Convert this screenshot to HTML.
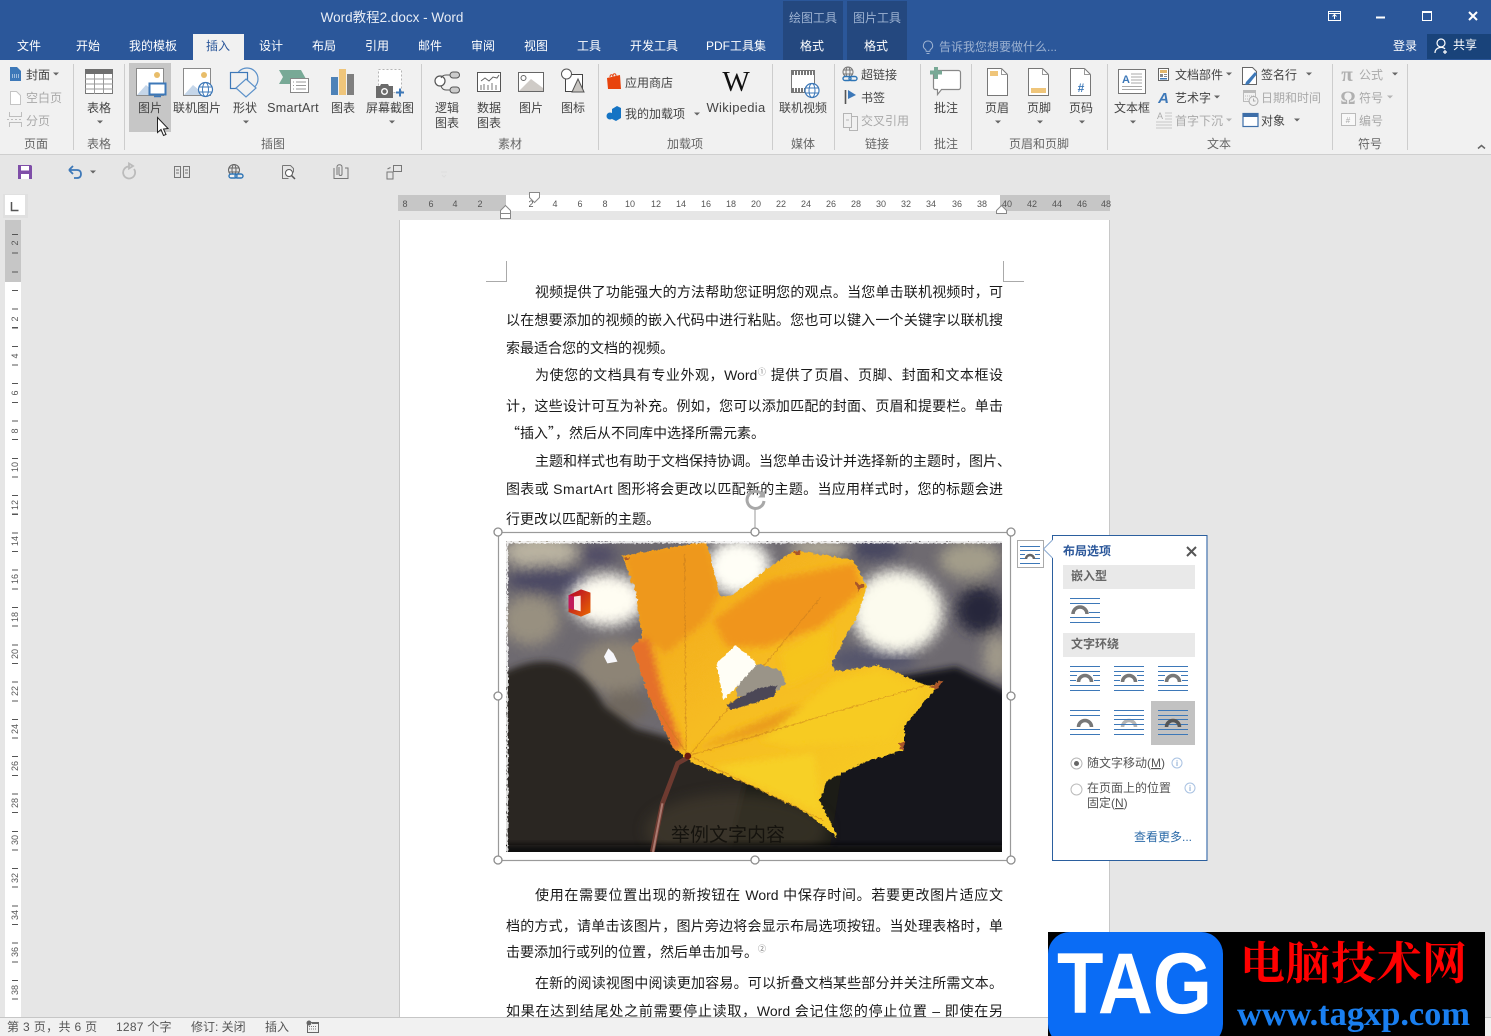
<!DOCTYPE html>
<html lang="zh-CN"><head><meta charset="utf-8"><title>Word教程2.docx - Word</title>
<style>
html,body{margin:0;padding:0;width:1491px;height:1036px;overflow:hidden;background:#e6e6e6}
body{position:relative;font-family:"Liberation Sans","Noto Sans CJK SC",sans-serif}
svg{position:absolute;left:0;top:0;display:block}
text{font-family:"Liberation Sans","Noto Sans CJK SC",sans-serif;font-size:12px;fill:#444}
.c{text-anchor:middle}
.g{fill:#a9a9a9}
.l{fill:#666}
.w{fill:#fff}
.t{fill:#e8edf5}
.page{position:absolute;left:400px;top:220px;width:709px;height:798px;background:#fff;box-shadow:-1px 0 0 #c8c8c8,1px 0 0 #c8c8c8}
.ln{position:absolute;left:506px;width:497px;height:20px;line-height:20px;font-size:14px;color:#1a1a1a;font-family:"Liberation Sans","WenQuanYi Zen Hei","Noto Sans CJK SC",sans-serif;text-align:justify;text-align-last:justify;white-space:nowrap}
.i{padding-left:29px;width:468px}
.s{text-align-last:left}
.q{font-family:"Noto Sans CJK SC",sans-serif}
.e{letter-spacing:.6px}
sup{font-size:8px;line-height:0;color:#777}
.vr{position:absolute;left:5px;top:220px;width:16px;height:798px;background:#fff}
.vr i{position:absolute;left:0;top:0;width:16px;height:62px;background:#c6c6c6}
.vt{position:absolute;left:7px;top:0;width:6px;height:798px;background:repeating-linear-gradient(to bottom,transparent 0,transparent 14px,#555 14px,#555 15px,transparent 15px,transparent 18.65px)}
</style></head><body>

<div class="page"></div>
<div class="vr"><i></i><div class="vt"></div></div>

<div class="ln i" style="top:282px">视频提供了功能强大的方法帮助您证明您的观点。当您单击联机视频时，可</div>
<div class="ln" style="top:310px">以在想要添加的视频的嵌入代码中进行粘贴。您也可以键入一个关键字以联机搜</div>
<div class="ln s" style="top:338px">索最适合您的文档的视频。</div>
<div class="ln i" style="top:365px">为使您的文档具有专业外观，Word<sup>①</sup> 提供了页眉、页脚、封面和文本框设</div>
<div class="ln" style="top:396px">计，这些设计可互为补充。例如，您可以添加匹配的封面、页眉和提要栏。单击</div>
<div class="ln s" style="top:423px"><span class="q">“插入”</span>，然后从不同库中选择所需元素。</div>
<div class="ln i" style="top:451px">主题和样式也有助于文档保持协调。当您单击设计并选择新的主题时，图片、</div>
<div class="ln" style="top:479px">图表或 <span class="e">SmartArt</span> 图形将会更改以匹配新的主题。当应用样式时，您的标题会进</div>
<div class="ln s" style="top:509px">行更改以匹配新的主题。</div>
<div class="ln i" style="top:885px">使用在需要位置出现的新按钮在 Word 中保存时间。若要更改图片适应文</div>
<div class="ln" style="top:916px">档的方式，请单击该图片，图片旁边将会显示布局选项按钮。当处理表格时，单</div>
<div class="ln s" style="top:942px">击要添加行或列的位置，然后单击加号。<sup>②</sup></div>
<div class="ln i" style="top:973px">在新的阅读视图中阅读更加容易。可以折叠文档某些部分并关注所需文本。</div>
<div class="ln" style="top:1001px">如果在达到结尾处之前需要停止读取，Word 会记住您的停止位置 – 即使在另</div>

<svg width="1491" height="1036" viewBox="0 0 1491 1036" xmlns="http://www.w3.org/2000/svg">
<defs>
<path id="ar" d="M-3-1.5h6l-3 3z" fill="#666"/>
<path id="arg" d="M-3-1.5h6l-3 3z" fill="#b5b5b5"/>
<path id="arc" d="M8.500 16a6.500 6.500 0 0 1 13 0" fill="none" stroke="#777" stroke-width="3.500"/>
<path id="wl" d="M0 .5h30M0 5.500h30M0 9.500h7M23 9.500h7M0 14.500h6M24 14.500h6M0 19.500h30M0 24.500h30" stroke="#3d78b8" fill="none"/>
<filter id="b8" x="-40%" y="-40%" width="180%" height="180%"><feGaussianBlur stdDeviation="20"/></filter>
<filter id="b3" x="-30%" y="-30%" width="160%" height="160%"><feGaussianBlur stdDeviation="10"/></filter>
<filter id="rough" x="-5%" y="-5%" width="110%" height="110%"><feTurbulence type="fractalNoise" baseFrequency=".09" numOctaves="2" seed="4"/><feDisplacementMap in="SourceGraphic" scale="14" xChannelSelector="R" yChannelSelector="G"/></filter>
<filter id="rough2" x="-5%" y="-5%" width="110%" height="110%"><feTurbulence type="fractalNoise" baseFrequency=".12" numOctaves="2" seed="9"/><feDisplacementMap in="SourceGraphic" scale="10" xChannelSelector="R" yChannelSelector="G"/></filter>
<linearGradient id="leafg" x1="0" y1="0" x2="1" y2="1"><stop offset="0" stop-color="#f0a01e"/><stop offset=".42" stop-color="#f6bb20"/><stop offset="1" stop-color="#f7d226"/></linearGradient>
<linearGradient id="off" x1="0" y1="0" x2="1" y2="1"><stop offset="0" stop-color="#b3002a"/><stop offset="1" stop-color="#ea6a00"/></linearGradient>
<clipPath id="imgc"><rect x="47" y="183" width="1468" height="933"/></clipPath>
<clipPath id="leafc"><path d="M390 228L640 185 680 350 710 350 830 260 900 212 1075 240 1115 320 1090 400 1010 550 1020 575 1150 555 1300 620 1340 600 1225 740 1225 810 1100 850 1000 900 975 960 1030 1075 940 1000 780 920 600 850 540 800 470 650 420 500 450 470 430 330z"/></clipPath>
</defs>

<!-- title bar -->
<rect width="1491" height="60" fill="#2b579a"/>
<rect x="783" y="1" width="60" height="59" fill="#24487f"/>
<rect x="847" y="1" width="60" height="59" fill="#24487f"/>
<rect x="1427" y="34" width="64" height="25" fill="#19437a"/>
<rect x="193" y="34" width="51" height="26" fill="#f1f1f1"/>
<text x="392" y="22" class="c t" style="font-size:13.5px">Word教程2.docx - Word</text>
<text x="813" y="22" class="c" style="fill:#9db2d1">绘图工具</text>
<text x="877" y="22" class="c" style="fill:#9db2d1">图片工具</text>
<g class="tabs">
<text x="29" y="50" class="c w">文件</text><text x="88" y="50" class="c w">开始</text><text x="153" y="50" class="c w">我的模板</text>
<text x="218" y="50" class="c" style="fill:#2b579a">插入</text><text x="271" y="50" class="c w">设计</text><text x="324" y="50" class="c w">布局</text>
<text x="377" y="50" class="c w">引用</text><text x="430" y="50" class="c w">邮件</text><text x="483" y="50" class="c w">审阅</text>
<text x="536" y="50" class="c w">视图</text><text x="589" y="50" class="c w">工具</text><text x="654" y="50" class="c w">开发工具</text>
<text x="736" y="50" class="c w">PDF工具集</text><text x="812" y="50" class="c w">格式</text><text x="876" y="50" class="c w">格式</text>
<text x="939" y="51" style="fill:#9db2d1">告诉我您想要做什么...</text>
<text x="1405" y="50" class="c w">登录</text><text x="1465" y="49" class="c w">共享</text>
</g>
<path d="M928 41a4.6 4.6 0 0 1 2.6 8.4c-.6.5-.7 1-.8 2h-3.6c-.1-1-.2-1.500-.8-2A4.600 4.600 0 0 1 928 41zM926.500 53.500h3" fill="none" stroke="#9db2d1"/>
<!-- window controls -->
<path d="M1328.500 11.500h12v9h-12zM1328.500 13.500h12M1334.500 19v-4M1332.500 16.500l2-2 2 2" fill="none" stroke="#fff"/>
<path d="M1376 17.500h9" stroke="#fff" stroke-width="2"/>
<path d="M1422.500 11.500h9v9h-9z" fill="none" stroke="#fff"/><path d="M1422 12h10" stroke="#fff" stroke-width="2"/>
<path d="M1469 12l8 8M1477 12l-8 8" stroke="#fff" stroke-width="2"/>
<circle cx="1441" cy="43" r="4" fill="none" stroke="#fff" stroke-width="1.200"/><path d="M1435 53c0-6 8-7 10-4M1445 50v4M1443 52h4" fill="none" stroke="#fff" stroke-width="1.200"/>

<!-- ribbon -->
<rect y="60" width="1491" height="94" fill="#f1f1f1"/>
<rect y="154" width="1491" height="1" fill="#cfcfcf"/>
<path d="M73.500 64v86M124.500 64v86M421.500 64v86M598.500 64v86M772.500 64v86M834.500 64v86M920.500 64v86M971.500 64v86M1107.500 64v86M1332.500 64v86M1407.500 64v86" stroke="#cdcdcd"/>
<rect x="129" y="63" width="42" height="69" fill="#c6c6c6"/>

<!-- page group -->
<path d="M10 67h7l4 4v10H10z" fill="#3d78b8"/><path d="M12 75h7M12 77h7" stroke="#fff" stroke-dasharray="1 1"/>
<text x="26" y="79">封面</text><use href="#ar" x="56" y="74"/>
<path d="M10.500 91.500h6l4 4v9h-10z" fill="#fff" stroke="#c4c4c4"/>
<text x="26" y="102" class="g">空白页</text>
<path d="M9.500 112v4.500h12V112M9.500 127v-4.500h12v4.500M7 119.500h2M11 119.500h2M15 119.500h2M19 119.500h2" fill="none" stroke="#bdbdbd"/>
<text x="26" y="125" class="g">分页</text>
<text x="36" y="148" class="c l">页面</text>

<!-- table -->
<rect x="85.500" y="69.500" width="27" height="24" fill="#fff" stroke="#777"/><rect x="85" y="69" width="28" height="5" fill="#6f6f6f"/>
<path d="M85 79h28M85 84h28M85 89h28M94.500 74v20M103.500 74v20" stroke="#9a9a9a"/>
<text x="99" y="112" class="c">表格</text><use href="#ar" x="100" y="122"/><text x="99" y="148" class="c l">表格</text>

<!-- picture -->
<g>
<rect x="136.500" y="68.500" width="27" height="27" fill="#fff" stroke="#8a8a8a"/>
<path d="M137 95l9-10 6 5 3-2 8 7z" fill="#c5d6e9"/><circle cx="157" cy="75" r="3" fill="#e8bd6a"/>
<rect x="149.500" y="83.500" width="16" height="11" fill="#fff" stroke="#3d78b8" stroke-width="2"/><path d="M154 96.500h7" stroke="#3d78b8" stroke-width="1.500"/>
</g>
<text x="150" y="112" class="c">图片</text>
<!-- cursor -->
<path d="M157.500 117.500v15l3.500-3 2.500 6 2.500-1-2.500-5.500 4.500-.5z" fill="#fff" stroke="#222"/>

<!-- online pic -->
<rect x="183.500" y="68.500" width="27" height="27" fill="#fff" stroke="#8a8a8a"/>
<path d="M184 95l9-10 6 5 3-2 8 7z" fill="#c5d6e9"/><circle cx="204" cy="75" r="3" fill="#e8bd6a"/>
<circle cx="205.500" cy="89.500" r="7" fill="#fff" stroke="#3d78b8" stroke-width="1.200"/><ellipse cx="205.500" cy="89.500" rx="3" ry="7" fill="none" stroke="#3d78b8"/><path d="M199 87h13M199 92h13" stroke="#3d78b8"/>
<text x="197" y="112" class="c">联机图片</text>

<!-- shapes -->
<circle cx="247" cy="79" r="11" fill="none" stroke="#5c91c9" stroke-width="1.200"/>
<rect x="230.500" y="72.500" width="17" height="16" fill="#f1f1f1" stroke="#3d78b8" stroke-width="1.200"/>
<path d="M246 79l10 9-10 9-10-9z" fill="#f1f1f1" stroke="#5c91c9" stroke-width="1.200"/>
<text x="245" y="112" class="c">形状</text><use href="#ar" x="246" y="122"/>

<!-- smartart -->
<path d="M279 70h22l5 9h-16v5h-11l4-7z" fill="#78a996"/>
<rect x="290.500" y="78.500" width="18" height="14" fill="#fff" stroke="#888"/><path d="M293 82h1M296 82h10M293 85.500h1M296 85.500h10M293 89h1M296 89h10" stroke="#999"/>
<text x="293" y="112" class="c" style="letter-spacing:.3px;font-size:12.500px">SmartArt</text>

<!-- chart -->
<rect x="331" y="77" width="7" height="18" fill="#4d82b8"/><rect x="339" y="69" width="7" height="26" fill="#efc57a"/><rect x="347" y="74" width="7" height="21" fill="#7f7f7f"/>
<text x="343" y="112" class="c">图表</text>

<!-- screenshot -->
<rect x="378.500" y="69.500" width="23" height="23" fill="#fff" stroke="#b5b5b5" stroke-dasharray="2 2"/>
<path d="M376 86h4l1-2h7l1 2h4v12h-17z" fill="#6b6b6b"/><circle cx="384.500" cy="91.500" r="2.800" fill="none" stroke="#fff" stroke-width="1.400"/>
<path d="M396 92.500h8M400 88.500v8" stroke="#3d78b8" stroke-width="2"/>
<text x="390" y="112" class="c">屏幕截图</text><use href="#ar" x="392" y="122"/>
<text x="273" y="148" class="c l">插图</text>

<!-- logic chart -->
<circle cx="440" cy="81" r="5" fill="#fff" stroke="#555" stroke-width="1.200"/>
<rect x="450" y="72" width="9.500" height="6" rx="3" fill="#ccc" stroke="#555"/><rect x="450" y="87" width="9.500" height="6" rx="3" fill="#ccc" stroke="#555"/>
<path d="M450 75h-4c-2 0-4 1-5 3M450 90h-4c-2 0-4-1-5-4" fill="none" stroke="#555"/>
<text x="447" y="112" class="c">逻辑</text><text x="447" y="127" class="c">图表</text>
<!-- data chart -->
<rect x="477.500" y="72.500" width="23" height="19" fill="#fff" stroke="#555"/>
<path d="M481 81l4-3 4 3 4-4 4 1 2-3" fill="none" stroke="#666"/><path d="M481 90v-5M484 90v-6M488 90v-5M492 90v-7M496 90v-5" stroke="#777"/>
<text x="489" y="112" class="c">数据</text><text x="489" y="127" class="c">图表</text>
<!-- picture material -->
<rect x="518.500" y="72.500" width="25" height="19" fill="#fff" stroke="#666"/><path d="M519 91l12-12 12 9v3z" fill="#cfcbc7"/><circle cx="523.500" cy="78" r="2.500" fill="#fff" stroke="#666"/>
<text x="531" y="112" class="c">图片</text>
<!-- icon material -->
<path d="M565.500 74.500h17v17h-17z" fill="#fff" stroke="#444"/><path d="M572 92l6-13 6 13z" fill="#c9c6c2" stroke="#555"/><circle cx="566.500" cy="74" r="5" fill="#fff" stroke="#555"/>
<text x="573" y="112" class="c">图标</text>
<text x="510" y="148" class="c l">素材</text>

<!-- add-ins -->
<path d="M607 78l13-3 1 14-13 0z" fill="#e8430d"/><path d="M610 77c0-3 3-3 3 0M613 76c0-3 3-3 3 0" fill="none" stroke="#e8430d"/>
<text x="625" y="87">应用商店</text>
<path d="M612 109l5-3 4 2v10l-5 3-4-2z" fill="#1574c4"/><circle cx="610" cy="116" r="3.500" fill="#1574c4"/>
<text x="625" y="118">我的加载项</text><use href="#ar" x="697" y="114"/>
<text x="736" y="91" class="c" style="font-family:'Liberation Serif',serif;font-size:29px;fill:#111">W</text>
<text x="736" y="112" class="c" style="font-size:13px;letter-spacing:.3px">Wikipedia</text>
<text x="685" y="148" class="c l">加载项</text>

<!-- media -->
<rect x="791.500" y="70.500" width="23" height="22" fill="#fff" stroke="#777"/><path d="M792 73h22M792 90h22" stroke="#777" stroke-width="4" stroke-dasharray="2 1"/>
<circle cx="812" cy="90.500" r="7" fill="#fff" stroke="#3d78b8" stroke-width="1.200"/><ellipse cx="812" cy="90.500" rx="3" ry="7" fill="none" stroke="#3d78b8"/><path d="M805 88h14M805 93h14" stroke="#3d78b8"/>
<text x="803" y="112" class="c">联机视频</text><text x="803" y="148" class="c l">媒体</text>

<!-- links -->
<circle cx="848" cy="72" r="5" fill="none" stroke="#777"/><ellipse cx="848" cy="72" rx="2" ry="5" fill="none" stroke="#777"/><path d="M843 70h10M843 74h10" stroke="#777"/>
<rect x="843" y="76.500" width="8" height="4" rx="2" fill="#f1f1f1" stroke="#2e75b6" stroke-width="1.400"/><rect x="849" y="76.500" width="8" height="4" rx="2" fill="none" stroke="#2e75b6" stroke-width="1.400"/>
<text x="861" y="79">超链接</text>
<path d="M845.500 90v14" stroke="#555" stroke-width="1.600"/><path d="M848 90l8 5-8 4z" fill="#3d78b8"/>
<text x="861" y="102">书签</text>
<path d="M843.500 113.500h8v14h-8zM852 116.500h5.500v14h-8v-3" fill="none" stroke="#b5b5b5"/><path d="M846 120h3" stroke="#b5b5b5"/>
<text x="861" y="125" class="g">交叉引用</text>
<text x="877" y="148" class="c l">链接</text>

<!-- comment -->
<path d="M935.500 70.500h23a2 2 0 0 1 2 2v15a2 2 0 0 1-2 2h-17l-4 5v-5h-2a2 2 0 0 1-2-2v-15a2 2 0 0 1 2-2z" fill="#fff" stroke="#888" stroke-width="1.200"/>
<path d="M930 72.500h12M936 67v12" stroke="#78a996" stroke-width="4"/>
<text x="946" y="112" class="c">批注</text><text x="946" y="148" class="c l">批注</text>

<!-- header footer -->
<path d="M987.500 68.500h14l6 6v21h-20z" fill="#fff" stroke="#777"/><path d="M1001.500 68.500v6h6" fill="none" stroke="#999"/><rect x="990" y="71" width="8" height="5" fill="#efc57a"/>
<text x="997" y="112" class="c">页眉</text><use href="#ar" x="998" y="122"/>
<path d="M1028.500 68.500h14l6 6v21h-20z" fill="#fff" stroke="#777"/><path d="M1042.500 68.500v6h6" fill="none" stroke="#999"/><rect x="1031" y="88" width="15" height="5" fill="#efc57a"/>
<text x="1039" y="112" class="c">页脚</text><use href="#ar" x="1040" y="122"/>
<path d="M1070.500 68.500h14l6 6v21h-20z" fill="#fff" stroke="#777"/><path d="M1084.500 68.500v6h6" fill="none" stroke="#999"/>
<text x="1081" y="92" class="c" style="font-size:12px;font-weight:bold;fill:#3d78b8">#</text>
<text x="1081" y="112" class="c">页码</text><use href="#ar" x="1082" y="122"/>
<text x="1039" y="148" class="c l">页眉和页脚</text>

<!-- text group -->
<rect x="1118.500" y="69.500" width="27" height="24" fill="#fff" stroke="#777"/>
<text x="1126" y="83" class="c" style="font-size:11px;font-weight:bold;fill:#3d78b8">A</text>
<path d="M1131 74h11M1131 77h11M1131 80h11M1131 83h11M1122 86.500h20M1122 89.500h20" stroke="#aaa"/>
<text x="1132" y="112" class="c">文本框</text><use href="#ar" x="1133" y="122"/>
<rect x="1158.500" y="68.500" width="10" height="12" fill="#fff" stroke="#666"/><rect x="1160" y="70" width="7" height="3" fill="#e2b66a"/><rect x="1160" y="74" width="3" height="3" fill="#888"/><path d="M1164 74.500h3M1164 76.500h3" stroke="#888"/><rect x="1160" y="78" width="7" height="1.500" fill="#3d78b8"/>
<text x="1175" y="79">文档部件</text><use href="#ar" x="1229" y="74"/>
<text x="1163.500" y="103" class="c" style="font-size:15px;font-weight:bold;font-style:italic;fill:#3d78b8">A</text>
<text x="1175" y="102">艺术字</text><use href="#ar" x="1217" y="97"/>
<text x="1160" y="119" class="c" style="font-size:9px;fill:#aaa">A</text><path d="M1165 113h7M1165 116h7M1165 119h7M1156 122h16M1156 125h16M1156 128h16" stroke="#c6c6c6"/>
<text x="1175" y="125" class="g">首字下沉</text><use href="#arg" x="1229" y="120"/>
<path d="M1242.500 67.500h10l4 4v13h-14z" fill="#fff" stroke="#666"/><path d="M1246 82l9-10 2 2-8 10-4 1z" fill="#3d78b8"/>
<text x="1261" y="79">签名行</text><use href="#ar" x="1309" y="74"/>
<rect x="1243" y="90" width="12" height="3" fill="#bbb"/><rect x="1243.500" y="90.500" width="12" height="11" fill="none" stroke="#bbb"/><path d="M1245 96h9M1245 99h5" stroke="#bbb" stroke-dasharray="1 1"/><circle cx="1253.500" cy="101" r="4.500" fill="#f1f1f1" stroke="#aaa"/><path d="M1253.500 98.500v2.500h2" stroke="#aaa" fill="none"/>
<text x="1261" y="102" class="g">日期和时间</text>
<rect x="1243" y="113.500" width="15" height="13" fill="#fff" stroke="#3d6ea8" stroke-width="1.200"/><rect x="1243" y="113" width="15" height="4" fill="#3d6ea8"/>
<text x="1261" y="125">对象</text><use href="#ar" x="1297" y="120"/>
<text x="1219" y="148" class="c l">文本</text>

<!-- symbols -->
<text x="1347" y="81" class="c" style="font-family:'Liberation Serif',serif;font-size:21px;font-weight:bold;fill:#b0b0b0">π</text>
<text x="1359" y="79" class="g">公式</text><use href="#ar" x="1395" y="74"/>
<text x="1348" y="104" class="c" style="font-family:'Liberation Serif',serif;font-size:19px;font-weight:bold;fill:#b0b0b0">Ω</text>
<text x="1359" y="102" class="g">符号</text><use href="#arg" x="1390" y="97"/>
<rect x="1341.500" y="113.500" width="14" height="12" fill="#f8f8f8" stroke="#bbb"/><text x="1348" y="123" class="c" style="font-size:8px;fill:#aaa">#</text>
<text x="1359" y="125" class="g">编号</text>
<text x="1370" y="148" class="c l">符号</text>
<path d="M1478 148.500l3.500-3 3.500 3" fill="none" stroke="#666" stroke-width="1.500"/>

<!-- QAT -->
<path d="M18 165h13l1 1v13H18z" fill="#7f4ea8"/><rect x="21" y="166" width="8" height="4.500" fill="#fff"/><rect x="21" y="174" width="8" height="5" fill="#fff"/>
<path d="M69 170l4-4M69 170l4 4M69 170h8c3 0 4 2 4 4s-1 4-4 4h-3" fill="none" stroke="#3d78b8" stroke-width="1.800"/>
<use href="#ar" x="93" y="172"/>
<path d="M134 169a6 6 0 1 1-5-2.500M129 163.500v5l4-2.500z" fill="none" stroke="#bbb" stroke-width="1.800"/>
<path d="M174.500 166.500h6v11h-6zM183.500 166.500h6v11h-6zM176 170h3M176 173h3M185 170h3M185 173h3" fill="none" stroke="#777"/>
<circle cx="234" cy="170" r="5.500" fill="none" stroke="#666"/><ellipse cx="234" cy="170" rx="2" ry="5.500" fill="none" stroke="#666"/><path d="M229 168h10M229 172h10" stroke="#666"/>
<rect x="229" y="174" width="8" height="4" rx="2" fill="#f1f1f1" stroke="#2e75b6" stroke-width="1.400"/><rect x="235" y="174" width="8" height="4" rx="2" fill="none" stroke="#2e75b6" stroke-width="1.400"/>
<path d="M282.500 165.500h8l3 3v4M282.500 165.500v13h6" fill="none" stroke="#777"/><circle cx="289" cy="173" r="3.500" fill="#fff" stroke="#555"/><path d="M291.500 175.500l3.500 3.500" stroke="#555" stroke-width="1.500"/>
<path d="M334 168v10.500h14V168h-3M339 167v7c0 2 3 2 3 0v-7c0-3-5-3-5 0v8" fill="none" stroke="#777"/>
<path d="M387 172h6v7h-6zM393.500 165.500h8v6h-8zM387.500 169l3-1.500" fill="none" stroke="#777"/>
<path d="M441 172h6M442 175l2 2 2-2" fill="none" stroke="#ddd"/>

<!-- rulers -->
<rect x="398" y="195" width="712" height="16" fill="#c6c6c6"/>
<rect x="506" y="195" width="494" height="16" fill="#fff"/>
<g>
<text x="405" y="207" class="c" style="font-size:9px;fill:#555">8</text><text x="431" y="207" class="c" style="font-size:9px;fill:#555">6</text><text x="455" y="207" class="c" style="font-size:9px;fill:#555">4</text><text x="480" y="207" class="c" style="font-size:9px;fill:#555">2</text>
<text x="531" y="207" class="c" style="font-size:9px;fill:#555">2</text><text x="555" y="207" class="c" style="font-size:9px;fill:#555">4</text><text x="580" y="207" class="c" style="font-size:9px;fill:#555">6</text><text x="605" y="207" class="c" style="font-size:9px;fill:#555">8</text>
<text x="630" y="207" class="c" style="font-size:9px;fill:#555">10</text><text x="656" y="207" class="c" style="font-size:9px;fill:#555">12</text><text x="681" y="207" class="c" style="font-size:9px;fill:#555">14</text><text x="706" y="207" class="c" style="font-size:9px;fill:#555">16</text>
<text x="731" y="207" class="c" style="font-size:9px;fill:#555">18</text><text x="756" y="207" class="c" style="font-size:9px;fill:#555">20</text><text x="781" y="207" class="c" style="font-size:9px;fill:#555">22</text><text x="806" y="207" class="c" style="font-size:9px;fill:#555">24</text>
<text x="831" y="207" class="c" style="font-size:9px;fill:#555">26</text><text x="856" y="207" class="c" style="font-size:9px;fill:#555">28</text><text x="881" y="207" class="c" style="font-size:9px;fill:#555">30</text><text x="906" y="207" class="c" style="font-size:9px;fill:#555">32</text>
<text x="931" y="207" class="c" style="font-size:9px;fill:#555">34</text><text x="957" y="207" class="c" style="font-size:9px;fill:#555">36</text><text x="982" y="207" class="c" style="font-size:9px;fill:#555">38</text><text x="1007" y="207" class="c" style="font-size:9px;fill:#555">40</text>
<text x="1032" y="207" class="c" style="font-size:9px;fill:#555">42</text><text x="1057" y="207" class="c" style="font-size:9px;fill:#555">44</text><text x="1082" y="207" class="c" style="font-size:9px;fill:#555">46</text><text x="1106" y="207" class="c" style="font-size:9px;fill:#555">48</text>
</g>
<path d="M529.500 192.500h10v5l-5 5-5-5z" fill="#fff" stroke="#888"/>
<path d="M505.500 205.500l5 5v8h-10v-8zM500.500 213.500h10" fill="#fff" stroke="#888"/>
<path d="M1001.500 205.500l5 5v3h-10v-3z" fill="#fff" stroke="#888"/>
<rect x="3" y="194" width="25" height="24" fill="#e0e0e0"/><rect x="5" y="195" width="20" height="20" fill="#fff"/>
<path d="M11.500 202v8.500h7" fill="none" stroke="#555" stroke-width="1.500"/>
<g>
<text transform="translate(18,243) rotate(-90)" class="c" style="font-size:9px;fill:#555">2</text>
<text transform="translate(18,319) rotate(-90)" class="c" style="font-size:9px;fill:#555">2</text>
<text transform="translate(18,356) rotate(-90)" class="c" style="font-size:9px;fill:#555">4</text>
<text transform="translate(18,393) rotate(-90)" class="c" style="font-size:9px;fill:#555">6</text>
<text transform="translate(18,431) rotate(-90)" class="c" style="font-size:9px;fill:#555">8</text>
<text transform="translate(18,467) rotate(-90)" class="c" style="font-size:9px;fill:#555">10</text>
<text transform="translate(18,505) rotate(-90)" class="c" style="font-size:9px;fill:#555">12</text>
<text transform="translate(18,541) rotate(-90)" class="c" style="font-size:9px;fill:#555">14</text>
<text transform="translate(18,579) rotate(-90)" class="c" style="font-size:9px;fill:#555">16</text>
<text transform="translate(18,617) rotate(-90)" class="c" style="font-size:9px;fill:#555">18</text>
<text transform="translate(18,654) rotate(-90)" class="c" style="font-size:9px;fill:#555">20</text>
<text transform="translate(18,691) rotate(-90)" class="c" style="font-size:9px;fill:#555">22</text>
<text transform="translate(18,729) rotate(-90)" class="c" style="font-size:9px;fill:#555">24</text>
<text transform="translate(18,766) rotate(-90)" class="c" style="font-size:9px;fill:#555">26</text>
<text transform="translate(18,803) rotate(-90)" class="c" style="font-size:9px;fill:#555">28</text>
<text transform="translate(18,840) rotate(-90)" class="c" style="font-size:9px;fill:#555">30</text>
<text transform="translate(18,878) rotate(-90)" class="c" style="font-size:9px;fill:#555">32</text>
<text transform="translate(18,915) rotate(-90)" class="c" style="font-size:9px;fill:#555">34</text>
<text transform="translate(18,952) rotate(-90)" class="c" style="font-size:9px;fill:#555">36</text>
<text transform="translate(18,990) rotate(-90)" class="c" style="font-size:9px;fill:#555">38</text>
</g>

<!-- crop marks -->
<path d="M506.500 261v20.500H486M1003.500 261v20.500H1024" fill="none" stroke="#aaa"/>

<!-- picture -->
<svg x="506" y="541" width="496" height="311" viewBox="47 183 1468 933" preserveAspectRatio="none">
<g clip-path="url(#imgc)">
<rect x="47" y="183" width="1468" height="933" fill="#6e6a70"/>
<g filter="url(#rough)"><g filter="url(#b8)">
<ellipse cx="150" cy="215" rx="110" ry="50" fill="#b9b2a0"/>
<ellipse cx="170" cy="300" rx="120" ry="45" fill="#4c4864"/>
<ellipse cx="120" cy="420" rx="85" ry="75" fill="#989080"/>
<ellipse cx="320" cy="225" rx="55" ry="28" fill="#4d4965"/>
<ellipse cx="980" cy="205" rx="95" ry="25" fill="#b5ae9b"/>
<ellipse cx="1140" cy="205" rx="80" ry="35" fill="#45455f"/>
<ellipse cx="1420" cy="240" rx="90" ry="55" fill="#a39d8a"/>
<ellipse cx="1450" cy="390" rx="70" ry="70" fill="#26263a"/>
<ellipse cx="1500" cy="530" rx="40" ry="65" fill="#a09a8a"/>
<ellipse cx="1130" cy="540" rx="130" ry="40" fill="#55546c"/>
<ellipse cx="370" cy="560" rx="110" ry="80" fill="#8d8476"/>
<ellipse cx="400" cy="680" rx="70" ry="50" fill="#6f675f"/>
</g></g>
<g filter="url(#b3)">
<path d="M20 590Q120 530 200 550T340 680L430 745 520 770 820 900 820 1140H20z" fill="#2c2820"/>
<path d="M1000 760L1200 590 1380 560 1540 640V1140H960z" fill="#13121a"/>
<path d="M760 880L1040 880 1000 1140H700z" fill="#1f1b15"/>
</g>
<ellipse cx="730" cy="1050" rx="270" ry="110" fill="#4b4230" filter="url(#b8)" opacity=".5"/>
<path d="M20 1095h1520v50H20z" fill="#0d0c0a" filter="url(#b3)"/>
<g filter="url(#rough)"><g filter="url(#b8)">
<ellipse cx="345" cy="360" rx="110" ry="78" fill="#fffdf2"/>
<ellipse cx="735" cy="262" rx="95" ry="85" fill="#fffef6"/>
<ellipse cx="1205" cy="395" rx="135" ry="125" fill="#fcfbee"/>
</g></g>
<path d="M590 830L555 850 510 970 480 1116" fill="none" stroke="#6d3a30" stroke-width="14"/>
<path d="M510 970L482 1116" fill="none" stroke="#c4948a" stroke-width="6" opacity=".7"/>
<g filter="url(#rough)">
<rect x="380" y="180" width="970" height="900" fill="url(#leafg)" clip-path="url(#leafc)"/>
<g clip-path="url(#leafc)">
<g filter="url(#b3)">
<path d="M400 480L470 470 510 640 570 800 540 820 430 620z" fill="#e56f2a"/>
<path d="M400 220L640 180 680 340 640 420 520 520 440 460z" fill="#ee981c"/>
<path d="M660 420L830 300 1080 250 1100 330 980 440 820 500 700 500z" fill="#f0951a"/>
<path d="M600 810L850 700 1000 650 1000 690 800 760z" fill="#ea9c1c"/>
<path d="M860 520L1010 440 1000 560 880 620z" fill="#f6c51f"/>
<path d="M1020 600L1150 570 1280 630 1180 780 900 800 800 780z" fill="#f7cb22"/>
<path d="M660 860L960 820 980 1000 800 920z" fill="#f7d027"/>
</g>
</g>
<path d="M395 232l20 2-10 8zM895 215l22-3-6 16zM1300 622l40-24-14 28zM1205 790l20-5 2 30zM1082 308l28 8-20 20z" fill="#a8552a"/>
</g>
<g fill="none" stroke="#c67b1e" stroke-width="3" opacity=".55" filter="url(#rough2)"><path d="M575 220L580 820M590 825L980 350M595 825L1290 615M595 830L985 1020M585 825L470 650"/></g>
<circle cx="585" cy="828" r="10" fill="#6b1a10"/>
<g filter="url(#rough2)">
<path d="M670 550L725 495 780 540 790 560 730 620 690 660z" fill="#fffef6"/>
<path d="M790 552L860 570 875 610 840 640 730 650 730 620z" fill="#9a9488"/>
<path d="M700 675L790 625 850 615 840 650 715 690z" fill="#4c4756"/>
</g>
<path d="M234 345L269 328 297 338V398L269 410 232 396z" fill="url(#off)"/><path d="M248 350L268 347V394L248 388z" fill="#fff" opacity=".9"/><path d="M232 345L248 350V390L232 385z" fill="#c2185b"/>
<path d="M350 505L365 520 377 545 347 550 337 530z" fill="#f6f6fa"/>
<g filter="url(#rough2)"><path d="M47 183H1515V190H47zM47 183H53V1116H47z" fill="#fff" opacity=".85"/></g>
</g>
</svg>
<text x="728" y="841" class="c" style="font-size:19px;fill:#15130e">举例文字内容</text>

<!-- selection -->
<rect x="498.500" y="532.500" width="512" height="328" fill="none" stroke="#9a9a9a" stroke-width="1.200"/>
<path d="M755 508v24" stroke="#9a9a9a"/>
<path d="M762.500 495a8.500 8.500 0 1 0 1.500 6" fill="none" stroke="#a8a8a8" stroke-width="3"/>
<path d="M765 490v7.500h-7z" fill="#a8a8a8"/>
<g fill="#fff" stroke="#8c8c8c" stroke-width="1.300">
<circle cx="498" cy="532" r="4"/><circle cx="755" cy="532" r="4"/><circle cx="1011" cy="532" r="4"/>
<circle cx="498" cy="696" r="4"/><circle cx="1011" cy="696" r="4"/>
<circle cx="498" cy="860" r="4"/><circle cx="755" cy="860" r="4"/><circle cx="1011" cy="860" r="4"/>
</g>

<!-- layout options -->
<rect x="1017.500" y="540.500" width="26" height="27" fill="#fff" stroke="#aaa"/>
<path d="M1020 546.500h20M1020 550.500h20M1020 554.500h5M1035 554.500h5M1020 558.500h5M1035 558.500h5M1020 563.500h20" stroke="#3d78b8" fill="none"/>
<path d="M1026 559a4 4 0 0 1 8 0" fill="none" stroke="#666" stroke-width="2.500"/>
<rect x="1052" y="535.500" width="155" height="325.500" fill="#fff"/>
<path d="M1052.500 540v-4.500h154.500v325H1052.500V558" fill="none" stroke="#2b5f9e"/><path d="M1206.500 536v324" stroke="#8aa9d0"/>
<path d="M1052.500 540l-9 9 9 9" fill="#fff" stroke="#8aa9d0"/>
<text x="1063" y="555" style="fill:#2b579a;font-weight:bold">布局选项</text>
<path d="M1187 547l9 9M1196 547l-9 9" stroke="#555" stroke-width="2"/>
<rect x="1063" y="565" width="132" height="24" fill="#e9e9e9"/>
<text x="1071" y="580" style="fill:#666;font-weight:bold">嵌入型</text>
<g transform="translate(1070,598)"><path d="M0 .5h30M0 5.500h30M19 14.500h11M0 19.500h30M0 24.500h30" stroke="#3d78b8"/><path d="M3 16a6.500 6.500 0 0 1 14 0" fill="none" stroke="#777" stroke-width="3.500"/></g>
<rect x="1063" y="633" width="132" height="24" fill="#e9e9e9"/>
<text x="1071" y="648" style="fill:#666;font-weight:bold">文字环绕</text>
<rect x="1151" y="701" width="44" height="44" fill="#c2c2c2"/>
<g transform="translate(1070,666)"><use href="#wl"/><use href="#arc"/></g>
<g transform="translate(1114,666)"><use href="#wl"/><use href="#arc"/></g>
<g transform="translate(1158,666)"><use href="#wl"/><use href="#arc"/></g>
<g transform="translate(1070,710)"><path d="M0 .5h30M0 5.500h30M0 19.500h30M0 24.500h30" stroke="#3d78b8"/><path d="M8.500 17a6.500 6.500 0 0 1 13 0" fill="none" stroke="#777" stroke-width="3.500"/></g>
<g transform="translate(1114,710)"><path d="M8.500 17a6.500 6.500 0 0 1 13 0" fill="none" stroke="#b5b5b5" stroke-width="3.500"/><path d="M0 .5h30M0 5.500h30M0 9.500h30M0 14.500h30M0 19.500h30M0 24.500h30" stroke="#3d78b8"/></g>
<g transform="translate(1158,710)"><path d="M0 .5h30M0 5.500h30M0 9.500h30M0 14.500h30M0 19.500h30M0 24.500h30" stroke="#3d78b8"/><path d="M8.500 17a6.500 6.500 0 0 1 13 0" fill="none" stroke="#555" stroke-width="3.500"/></g>
<circle cx="1076.500" cy="763.500" r="5.500" fill="#fff" stroke="#b5b5b5"/><circle cx="1076.500" cy="763.500" r="2.500" fill="#666"/>
<text x="1087" y="767" style="fill:#555">随文字移动(<tspan text-decoration="underline">M</tspan>)</text>
<circle cx="1177" cy="763" r="5" fill="#fff" stroke="#a9c2e2"/><text x="1177" y="766" class="c" style="font-size:8px;fill:#5d8cc4">i</text>
<circle cx="1076.500" cy="789.500" r="5.500" fill="#fff" stroke="#bbb"/>
<text x="1087" y="792" style="fill:#555">在页面上的位置</text><text x="1087" y="807" style="fill:#555">固定(<tspan text-decoration="underline">N</tspan>)</text>
<circle cx="1190" cy="788" r="5" fill="#fff" stroke="#a9c2e2"/><text x="1190" y="791" class="c" style="font-size:8px;fill:#5d8cc4">i</text>
<text x="1134" y="841" style="fill:#2b6aa8">查看更多...</text>

<!-- status bar -->
<rect y="1018" width="1491" height="18" fill="#f1f1f1"/><rect y="1017" width="1491" height="1" fill="#c6c6c6"/>
<text x="7" y="1031" style="fill:#555;letter-spacing:.35px">第 3 页，共 6 页</text>
<text x="116" y="1031" style="fill:#555;letter-spacing:.25px">1287 个字</text>
<text x="191" y="1031" style="fill:#555">修订: 关闭</text>
<text x="265" y="1031" style="fill:#555">插入</text>
<circle cx="309" cy="1023" r="2.500" fill="#666"/><rect x="307.500" y="1022.500" width="11" height="10" fill="none" stroke="#666"/><rect x="312" y="1022" width="7" height="2" fill="#666"/><path d="M309 1026.500h8M309 1029h8" stroke="#777" stroke-dasharray="1 1"/>

<!-- watermark -->
<rect x="1048" y="932" width="437" height="104" fill="#000"/>
<rect x="1048" y="932" width="175" height="114" rx="22" fill="#0a6cf5"/>
<text x="1057" y="1013" textLength="155" lengthAdjust="spacingAndGlyphs" style="font-size:86px;font-weight:bold;fill:#fff">TAG</text>
<text x="1240" y="979" textLength="227" style="font-family:'Noto Serif CJK SC',serif;font-size:45px;font-weight:bold;fill:#ff0000">电脑技术网</text>
<text x="1237" y="1025" textLength="233" lengthAdjust="spacingAndGlyphs" style="font-family:'Liberation Serif',serif;font-size:34px;font-weight:bold;fill:#1a7ff0">www.tagxp.com</text>
</svg>
</body></html>
